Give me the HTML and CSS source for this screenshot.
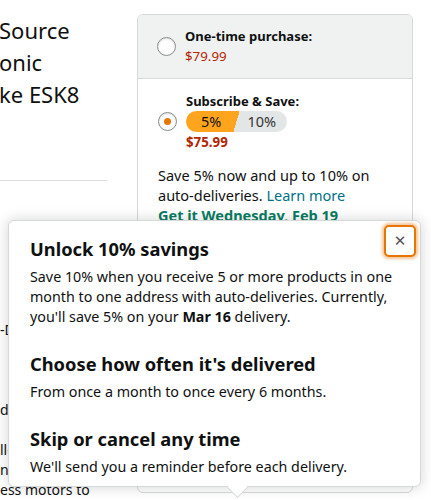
FILE: index.html
```html
<!DOCTYPE html>
<html>
<head>
<meta charset="utf-8">
<link rel="stylesheet" href="styles.css">
</head>
<body>
<div class="page">
  <div class="left">
    <div class="title">
      <div class="tl">Source</div>
      <div class="tl">onic</div>
      <div class="tl">ke ESK8</div>
    </div>
    <div class="rule"></div>
    <div class="about">
      <div class="al">-Dual motor speed</div>
      <div class="al in">control for boards</div>
      <div class="al in">with sensored and</div>
      <div class="al in">unsensored modes</div>
      <div class="al">d sensor support</div>
      <div class="al in">for smooth start</div>
      <div class="al">llows brushless</div>
      <div class="al">n and efficient</div>
      <div class="al">ess motors to</div>
    </div>
  </div>
  <div class="card">
    <div class="opt opt-top">
      <span class="radio"></span>
      <div class="opt-text">
        <div class="opt-title">One-time purchase:</div>
        <div class="price">$79.99</div>
      </div>
    </div>
    <div class="opt opt-sub">
      <div class="sub-row">
        <span class="radio radio-on"><span class="dot"></span></span>
        <div class="opt-text">
          <div class="opt-title">Subscribe &amp; Save:</div>
          <div class="pill"><span class="p5">5%</span><span class="p10">10%</span></div>
          <div class="price price-bold">$75.99</div>
        </div>
      </div>
      <p class="desc">Save 5% now and up to 10% on auto-deliveries. <span class="link">Learn more</span></p>
      <div class="ship">Get it Wednesday, Feb 19</div>
    </div>
  </div>
</div>

<div class="popover">
  <button class="close" aria-label="Close">&#x2715;</button>
  <h3>Unlock 10% savings</h3>
  <p>Save 10% when you receive 5 or more products in one month to one address with auto-deliveries. Currently, you'll save 5% on your <b>Mar 16</b> delivery.</p>
  <h3>Choose how often it's delivered</h3>
  <p>From once a month to once every 6 months.</p>
  <h3>Skip or cancel any time</h3>
  <p>We'll send you a reminder before each delivery.</p>
  <span class="arrow"></span>
</div>
</body>
</html>
```

FILE: styles.css
```css
html, body {
  margin: 0;
  padding: 0;
  background: #fff;
}
body {
  font-family: "Noto Sans", "Open Sans", sans-serif;
  color: #0f1111;
  width: 431px;
  height: 500px;
  overflow: hidden;
  position: relative;
}
.page {
  display: flex;
  align-items: flex-start;
}
.left {
  width: 107px;
  flex: none;
  margin-right: 30px;
  overflow: hidden;
}
.title {
  margin-top: 14px;
  font-size: 22px;
  line-height: 32px;
}
.tl {
  white-space: nowrap;
  margin-left: -1px;
}
.rule {
  margin-top: 70px;
  border-top: 1px solid #ddd;
}
.about {
  margin-top: 139px;
  font-size: 14px;
  line-height: 20px;
}
.al {
  white-space: nowrap;
}
.al.in {
  padding-left: 14px;
}
.card {
  width: 274px;
  margin-top: 14px;
  border: 1px solid #d5d9d9;
  border-radius: 6px;
  height: 477px;
  overflow: hidden;
}
.opt {
  font-size: 13px;
}
.opt-top {
  display: flex;
  align-items: center;
  background: #f0f2f2;
  border-bottom: 1px solid #d5d9d9;
  padding: 11px 12px 12px 19px;
  gap: 9px;
}
.radio {
  width: 17px;
  height: 17px;
  border: 1px solid #888c8c;
  border-radius: 50%;
  background: #fff;
  box-shadow: 0 1px 2px rgba(15,17,17,.15) inset;
  flex: none;
  display: flex;
  align-items: center;
  justify-content: center;
}
.radio-on .dot {
  width: 7px;
  height: 7px;
  border-radius: 50%;
  background: #e77600;
}
.opt-title {
  font-weight: 700;
  line-height: 20px;
}
.price {
  color: #b12704;
  line-height: 20px;
  font-size: 13.3px;
}
.price-bold {
  font-weight: 700;
}
.opt-sub {
  padding: 12px 12px 0 20px;
}
.sub-row {
  display: flex;
  align-items: center;
  gap: 9px;
}
.pill {
  display: flex;
  width: 101px;
  height: 21px;
  border-radius: 11px;
  overflow: hidden;
  background: linear-gradient(106deg, #ffa41c 50%, #e3e6e6 50%);
  font-size: 14.5px;
  line-height: 21px;
}
.p5, .p10 {
  flex: 1;
  text-align: center;
  color: #0f1111;
}
.p10 {
  color: #333;
}
.desc {
  margin: 13px 0 0;
  font-size: 14.5px;
  line-height: 20px;
}
.link {
  color: #007185;
}
.ship {
  color: #067d62;
  font-weight: 700;
  font-size: 14.5px;
  line-height: 20px;
}
.popover {
  position: absolute;
  left: 8px;
  top: 220px;
  width: 370px;
  height: 249px;
  padding: 16px 20px 0 21px;
  background: #fff;
  border: 1px solid #d5d9d9;
  border-radius: 6px;
  box-shadow: 0 0 14px rgba(15,17,17,.18);
}
.popover h3 {
  margin: 0;
  font-size: 18.3px;
  line-height: 24px;
  font-weight: 700;
}
.popover p {
  margin: 6px 0 25px;
  font-size: 14.3px;
  line-height: 20px;
}
.close {
  position: absolute;
  right: 4px;
  top: 4px;
  width: 32px;
  height: 32px;
  border: 2px solid #e77600;
  border-radius: 5px;
  background: #fff;
  box-shadow: 0 0 3px 2px rgba(228,121,17,.45);
  color: #555;
  font-size: 15px;
  font-weight: 700;
  padding: 0;
  font-family: "DejaVu Sans", sans-serif;
  line-height: 28px;
}
.arrow {
  position: absolute;
  left: 221px;
  bottom: -9px;
  width: 14px;
  height: 14px;
  background: #fff;
  border-right: 1px solid #d5d9d9;
  border-bottom: 1px solid #d5d9d9;
  transform: rotate(45deg);
}
```
